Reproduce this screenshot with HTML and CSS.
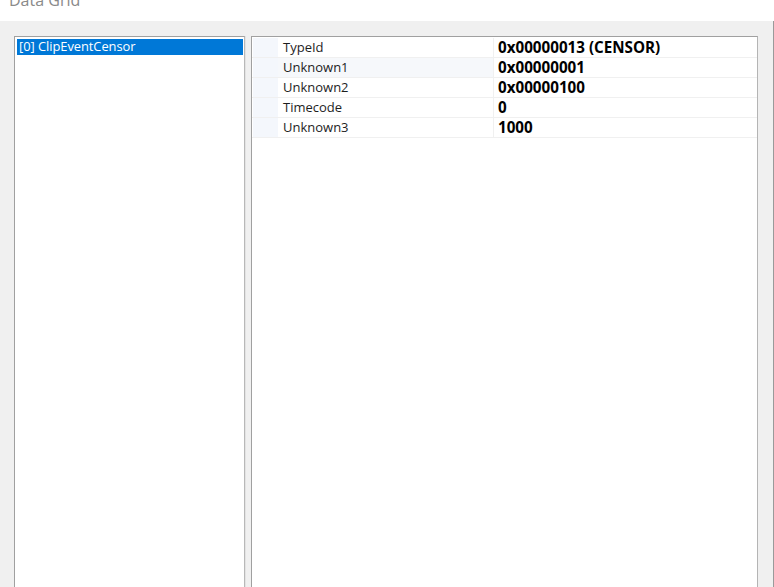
FILE: index.html
```html
<!DOCTYPE html>
<html lang="en">
<head>
    <meta charset="UTF-8">
    <title>Data Grid</title>
    <link rel="stylesheet" href="styles.css">
</head>
<body>
    <div class="titlebar">
        <span class="title">Data Grid</span>
    </div>

    <div class="panel">
        <div class="listbox">
            <div class="item selected">[0] ClipEventCensor</div>
        </div>

        <div class="grid">
            <div class="row">
                <div class="rowhead"></div>
                <div class="name">TypeId</div>
                <div class="value">0x00000013 (CENSOR)</div>
            </div>
            <div class="row alt">
                <div class="rowhead"></div>
                <div class="name">Unknown1</div>
                <div class="value">0x00000001</div>
            </div>
            <div class="row">
                <div class="rowhead"></div>
                <div class="name">Unknown2</div>
                <div class="value">0x00000100</div>
            </div>
            <div class="row">
                <div class="rowhead"></div>
                <div class="name">Timecode</div>
                <div class="value">0</div>
            </div>
            <div class="row">
                <div class="rowhead"></div>
                <div class="name">Unknown3</div>
                <div class="value">1000</div>
            </div>
        </div>
    </div>
</body>
</html>
```

FILE: styles.css
```css
html, body { margin: 0; padding: 0; height: 100%; overflow: hidden; }
body { font-family: "Open Sans", "Noto Sans", sans-serif; font-size: 13px; color: #1e1e1e; background: #fff; }

.titlebar { height: 21px; overflow: hidden; background: #fff; }
.title { display: block; margin: -11px 0 0 9px; font-size: 16px; line-height: 22px; color: #8a8a8a; }

.panel { display: flex; align-items: flex-start; gap: 6px; height: 600px; padding: 15px 0 0 14px; background: #f0f0f0; box-sizing: border-box; border-right: 1px solid #9a9a9a; }

.listbox { width: 226px; height: 560px; padding: 2px 1px 0 2px; background: #fff; border: 1px solid #a0a0a0; border-right-color: #b8b8b8; box-shadow: 1px 0 0 #e3e3e3; }
.item { height: 16px; line-height: 15px; padding-left: 2px; font-size: 12.9px; white-space: nowrap; letter-spacing: -0.05px; }
.item.selected { background: #0078d7; color: #fff; }

.grid { width: 505px; height: 560px; padding-top: 1px; background: #fff; border: 1px solid #a0a0a0; border-right-color: #b4b4b4; }
.row { display: flex; height: 19px; border-bottom: 1px solid #f0f0f0; }
.rowhead { width: 25px; margin-left: 1px; background: #f4f7fc; }
.name { width: 210px; padding-left: 5px; line-height: 19px; border-right: 1px solid #f0f0f0; }
.value { flex: 1; padding-left: 4px; line-height: 19px; font-size: 15.2px; font-weight: bold; color: #000; }
.alt .name { background: #f6f8fb; }
```
